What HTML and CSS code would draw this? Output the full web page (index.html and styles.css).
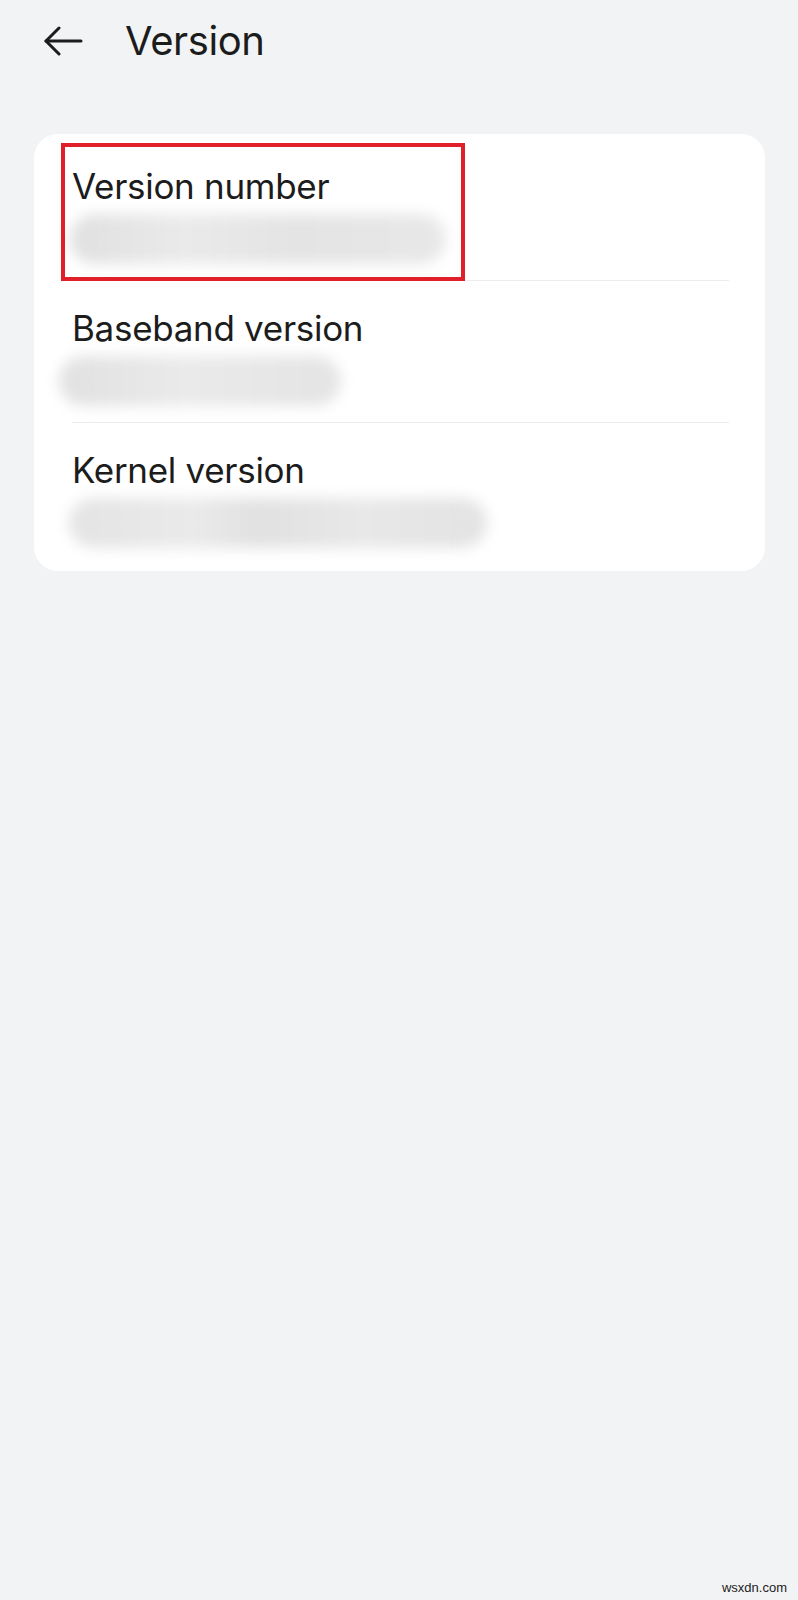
FILE: index.html
```html
<!DOCTYPE html>
<html lang="en">
<head>
<meta charset="utf-8">
<title>Version</title>
<link rel="stylesheet" href="styles.css">
</head>
<body>
<div class="screen">
  <header class="topbar">
    <span class="back">
      <svg width="40" height="30" viewBox="0 0 40 30" fill="none" stroke="#1c1c1c" stroke-width="3" stroke-linecap="round" stroke-linejoin="round">
        <path d="M3 15 H38"/>
        <path d="M16 2 L3 15 L16 28"/>
      </svg>
    </span>
    <h1 class="title">Version</h1>
  </header>

  <section class="card">
    <div class="row">
      <div class="label">Version number</div>
      <div class="blur blur-1"></div>
    </div>
    <div class="divider"></div>
    <div class="row">
      <div class="label">Baseband version</div>
      <div class="blur blur-2"></div>
    </div>
    <div class="divider"></div>
    <div class="row">
      <div class="label">Kernel version</div>
      <div class="blur blur-3"></div>
    </div>
    <div class="highlight"></div>
  </section>

  <div class="watermark">wsxdn.com</div>
</div>
</body>
</html>
```

FILE: styles.css
```css
html, body {
  margin: 0;
  padding: 0;
}
body {
  background: #f2f3f5;
  font-family: Inter, "Noto Sans", "Liberation Sans", sans-serif;
  color: #1c1c1c;
}
.screen {
  position: relative;
  width: 798px;
  height: 1600px;
  overflow: hidden;
}
.topbar {
  display: flex;
  align-items: center;
  height: 82px;
  padding-left: 43px;
}
.back {
  display: flex;
  width: 40px;
  height: 30px;
}
.title {
  margin: 0 0 0 42px;
  font-size: 40px;
  line-height: 50px;
  font-weight: 400;
  letter-spacing: -0.4px;
}
.card {
  position: relative;
  margin: 52px 33px 0 34px;
  background: #ffffff;
  border-radius: 24px;
  padding: 5px 0 7px;
}
.row {
  padding: 25px 36px 16px 38px;
}
.label {
  font-size: 35px;
  line-height: 44px;
  letter-spacing: -0.3px;
  white-space: nowrap;
}
.blur {
  height: 50px;
  margin-top: 6px;
  background: #e4e4e4;
  border-radius: 25px;
  filter: blur(7px);
}
.blur-1 {
  width: 376px;
  margin-left: -2px;
  background: linear-gradient(90deg, #e0e0e0, #eaeaea 30%, #e4e4e4 60%, #e8e8e8);
}
.blur-2 {
  width: 282px;
  margin-left: -13px;
  background: linear-gradient(90deg, #e1e1e1, #eaeaea 45%, #e4e4e4);
}
.blur-3 {
  width: 418px;
  margin-left: -3px;
  background: linear-gradient(90deg, #e4e4e4, #eaeaea 30%, #e1e1e1 45%, #e8e8e8 70%, #e3e3e3);
}
.divider {
  height: 1px;
  margin: 0 36px 0 38px;
  background: #ececec;
}
.highlight {
  position: absolute;
  left: 27px;
  top: 9px;
  width: 396px;
  height: 130px;
  border: 4px solid #e01f2a;
}
.watermark {
  position: absolute;
  right: 11px;
  bottom: 5px;
  font-family: "Liberation Sans", Arial, sans-serif;
  font-size: 13px;
  color: #222;
}
```
